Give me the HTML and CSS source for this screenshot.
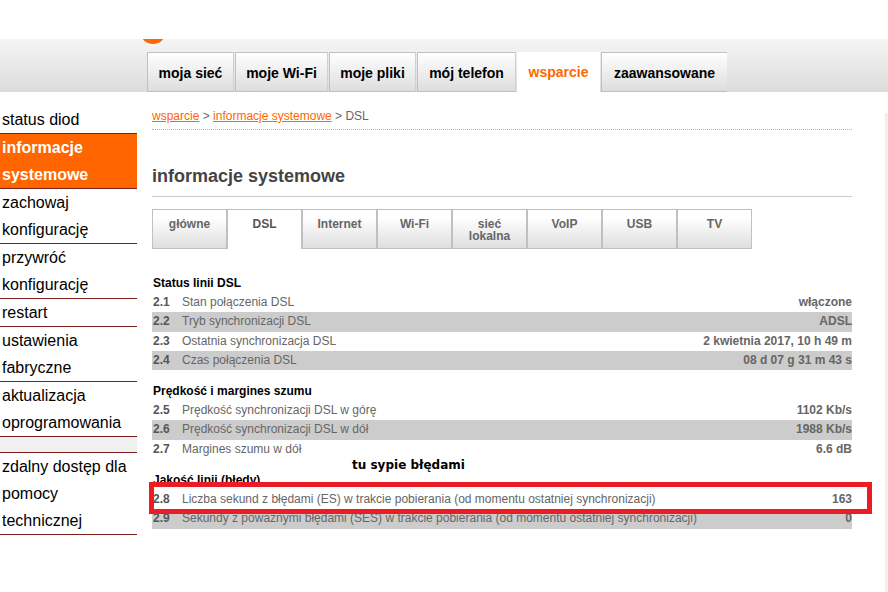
FILE: index.html
```html
<!DOCTYPE html>
<html lang="pl">
<head>
<meta charset="UTF-8">
<meta name="viewport" content="width=device-width, initial-scale=1.0">
<title>informacje systemowe</title>
<link rel="stylesheet" href="styles.css">
</head>
<body>
    <div class="top-space"></div>
    <div class="header">
        <div class="logo-dot"></div>
        <div class="main-nav">
            <a class="main-tab tab-w1">moja sieć</a>
            <a class="main-tab tab-w2">moje Wi-Fi</a>
            <a class="main-tab tab-w3">moje pliki</a>
            <a class="main-tab tab-w4">mój telefon</a>
            <a class="main-tab tab-w5 active">wsparcie</a>
            <a class="main-tab tab-w6">zaawansowane</a>
        </div>
    </div>
    <div class="page">
        <div class="sidebar">
            <a class="side-item">status diod</a>
            <a class="side-item active">informacje systemowe</a>
            <a class="side-item">zachowaj konfigurację</a>
            <a class="side-item">przywróć konfigurację</a>
            <a class="side-item">restart</a>
            <a class="side-item">ustawienia fabryczne</a>
            <a class="side-item">aktualizacja oprogramowania</a>
            <div class="side-gap"></div>
            <a class="side-item">zdalny dostęp dla pomocy technicznej</a>
        </div>
        <div class="content">
            <div class="crumbs"><a>wsparcie</a> &gt; <a>informacje systemowe</a> &gt; DSL</div>
            <h1>informacje systemowe</h1>
            <div class="sub-nav">
                <a class="sub-tab">główne</a>
                <a class="sub-tab active">DSL</a>
                <a class="sub-tab">Internet</a>
                <a class="sub-tab">Wi-Fi</a>
                <a class="sub-tab">sieć lokalna</a>
                <a class="sub-tab">VoIP</a>
                <a class="sub-tab">USB</a>
                <a class="sub-tab">TV</a>
            </div>

            <h2>Status linii DSL</h2>
            <div class="row"><b>2.1</b><span>Stan połączenia DSL</span><em>włączone</em></div>
            <div class="row grey"><b>2.2</b><span>Tryb synchronizacji DSL</span><em>ADSL</em></div>
            <div class="row"><b>2.3</b><span>Ostatnia synchronizacja DSL</span><em>2 kwietnia 2017, 10 h 49 m</em></div>
            <div class="row grey"><b>2.4</b><span>Czas połączenia DSL</span><em>08 d 07 g 31 m 43 s</em></div>

            <h2>Prędkość i margines szumu</h2>
            <div class="row"><b>2.5</b><span>Prędkość synchronizacji DSL w górę</span><em>1102 Kb/s</em></div>
            <div class="row grey"><b>2.6</b><span>Prędkość synchronizacji DSL w dół</span><em>1988 Kb/s</em></div>
            <div class="row"><b>2.7</b><span>Margines szumu w dół</span><em>6.6 dB</em></div>

            <h2>Jakość linii (błędy)</h2>
            <div class="row"><b>2.8</b><span>Liczba sekund z błędami (ES) w trakcie pobierania (od momentu ostatniej synchronizacji)</span><em>163</em></div>
            <div class="row grey"><b>2.9</b><span>Sekundy z poważnymi błędami (SES) w trakcie pobierania (od momentu ostatniej synchronizacji)</span><em>0</em></div>
        </div>
    </div>
    <!-- dorysowane na zrzucie -->
    <div class="note">tu sypie błędami</div>
    <div class="red-box"></div>
    <div class="scroll-edge"></div>
</body>
</html>
```

FILE: styles.css
```css
html, body {
    height: 100%;
}

body {
    position: relative;
    margin: 0;
    padding: 0;
    overflow: hidden;
    background-color: #fff;
    font-family: "Liberation Sans", Arial, sans-serif;
}

.top-space {
    height: 39px;
}

.header {
    position: relative;
    height: 53px;
    padding-left: 147px;
    box-sizing: border-box;
    background: linear-gradient(#f5f5f5, #dcdcdc);
    overflow: hidden;
}

.logo-dot {
    position: absolute;
    left: 140px;
    top: -21px;
    width: 26px;
    height: 26px;
    border-radius: 50%;
    background-color: #f60;
}

.main-nav {
    display: flex;
    gap: 1px;
    padding-top: 13px;
    height: 40px;
}

.main-tab {
    box-sizing: border-box;
    height: 40px;
    border: 1px solid #c0c0c0;
    border-right-color: #d0d0d0;
    text-align: center;
    font-size: 14px;
    font-weight: bold;
    line-height: 41px;
    color: #000;
    background: linear-gradient(#fff, #ddd);
}

.main-tab.active {
    border: 0;
    color: #f60;
    background: #fff;
}

.tab-w1 { width: 87px; }
.tab-w2 { width: 93px; }
.tab-w3 { width: 87px; }
.tab-w4 { width: 99px; }
.tab-w5 { width: 83px; }
.tab-w6 { width: 126px; border-right: 0; }

.page {
    display: flex;
}

.sidebar {
    width: 137px;
    padding-top: 14px;
    flex-shrink: 0;
}

.side-item {
    display: block;
    border-bottom: 1px solid #7b1f1f;
    padding-left: 2px;
    font-size: 16px;
    line-height: 27px;
    color: #000;
}

.side-item.active {
    border-top: 1px solid #7b1f1f;
    margin-top: -1px;
    font-weight: bold;
    color: #fff;
    background-color: #f60;
}

.side-gap {
    height: 15px;
    border-bottom: 1px solid #7b1f1f;
    background-color: #f0f0f0;
}

.content {
    width: 700px;
    margin-left: 15px;
}

.crumbs {
    margin-top: 17px;
    padding-bottom: 5px;
    border-bottom: 1px dotted #f0a070;
    font-size: 12px;
    line-height: 15px;
    color: #666;
}

.crumbs a {
    color: #f60;
    text-decoration: underline;
}

h1 {
    margin: 35px 0 12px;
    padding-bottom: 8px;
    border-bottom: 1px solid #ccc;
    font-size: 18px;
    line-height: 23px;
    color: #444;
}

.sub-nav {
    display: flex;
    height: 40px;
    margin-bottom: 25px;
}

.sub-tab {
    box-sizing: border-box;
    width: 75px;
    height: 40px;
    padding: 8px 8px 0;
    border: 1px solid #c0c0c0;
    margin-right: 0;
    text-align: center;
    font-size: 12px;
    font-weight: bold;
    line-height: 12px;
    color: #666;
    background: linear-gradient(#fff 20%, #dedede);
}

.sub-tab.active {
    border-bottom: 0;
    color: #555;
    background: #fff;
}

h2 {
    margin: 0;
    padding: 12px 0 0 1px;
    font-size: 12px;
    line-height: 19px;
    color: #000;
}

.sub-nav + h2 {
    padding-top: 0;
}

.row {
    display: flex;
    height: 19.3px;
    font-size: 12px;
    line-height: 19px;
    color: #666;
}

.row.grey {
    background-color: #ccc;
}

.row b {
    width: 30px;
    padding-left: 1px;
    box-sizing: border-box;
    font-size: 12px;
    color: #555;
}

.row span {
    flex: 1;
    white-space: nowrap;
}

.row em {
    font-style: normal;
    font-weight: bold;
    white-space: nowrap;
    color: #666;
}

.note {
    position: absolute;
    left: 352px;
    top: 457px;
    font-family: "DejaVu Sans", sans-serif;
    font-size: 12px;
    font-weight: bold;
    line-height: 16px;
    color: #000;
}

.red-box {
    position: absolute;
    left: 149px;
    top: 482px;
    width: 723px;
    height: 32px;
    box-sizing: border-box;
    border: 5px solid #ed1c24;
}

.scroll-edge {
    position: absolute;
    right: 0;
    top: 113px;
    bottom: 0;
    width: 3px;
    background-color: #f0f0f0;
}
```
